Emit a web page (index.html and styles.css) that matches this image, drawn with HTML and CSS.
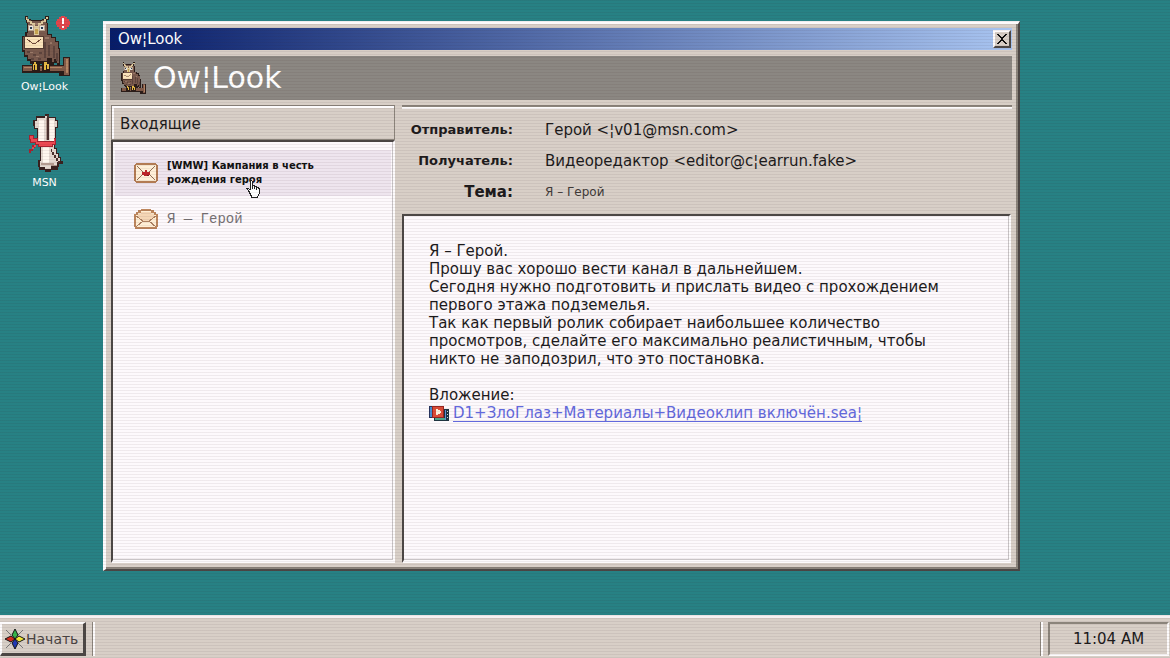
FILE: index.html
```html
<!DOCTYPE html>
<html lang="ru">
<head>
<meta charset="utf-8">
<title>Ow¦Look</title>
<link rel="stylesheet" href="styles.css">
</head>
<body>
<svg class="sprites" width="0" height="0" aria-hidden="true">
  <symbol id="owl" viewBox="0 0 50 60" shape-rendering="crispEdges">
    <path fill="#2b1c18" d="M3 0H6V3H9V4H20V3H23V0H27V4H25V7H26V18H30V21H34V25H37V32H38V50H35V47H32V50H28V46H23V48H8V45H5V41H2V36H0V20H3V16H5V7H4V4H3z"/>
    <path fill="#795a4d" d="M4 1H6V4H9V5H20V4H24V7H25V19H29V22H33V26H36V33H37V47H35V43H32V46H30V42H25V45H9V43H6V39H3V34H1V21H5V17H6V7H5V4H4z"/>
    <path fill="#5d443d" d="M22 26H24V42H22zM26 29H28V40H26zM31 30H33V42H31zM34 37H36V45H34zM5 35H8V37H5zM11 38H14V40H11zM17 36H20V38H17zM9 42H12V44H9zM16 42H19V44H16z"/>
    <path fill="#9a7968" d="M23 21H27V23H23zM28 26H30V28H28zM10 7H19V9H10zM8 36H11V37H8zM14 40H17V41H14z"/>
    <path fill="#dfcc9e" d="M4 1H5V3H7V5H10V7H13V10H16V7H19V5H22V3H24V1H26V3H24V6H21V8H19V11H17V19H12V11H10V8H8V6H5V4H4z"/>
    <path fill="#bfa994" d="M6 9H12V15H6zM17 9H23V15H17z"/>
    <path fill="#ece9e2" d="M7 10H11V14H7zM18 10H22V14H18z"/>
    <path fill="#2c4055" d="M8 11H10V13H8zM19 11H21V13H19z"/>
    <path fill="#c8a44f" d="M13 13H16V18H13z"/>
    <path fill="#553b30" d="M2 20H22V33H2z"/><path fill="#fbe3bb" d="M3 21H21V32H3z"/>
    <path d="M5 23L10 27H14L19 23" fill="none" stroke="#70493a"/>
    <path fill="#2b1c18" d="M0 49H41V41H48V60H37V57H0z"/><path fill="#805a48" d="M1 50H42V42H47V59H42V55H1z"/>
    <path fill="#b48564" d="M2 51H40V52H2zM44 43H46V57H44z"/>
    <path fill="#2b1c18" d="M10 46H18V55H10zM20 46H28V55H20z"/>
    <path fill="#e6bb43" d="M12 46H14V48H15V54H13V49H12V54H11V48H12zM22 46H25V48H27V53H25V49H24V54H22z"/>
  </symbol>
  <symbol id="envelope" viewBox="0 0 24 20" shape-rendering="crispEdges">
    <path fill="#b27b53" d="M2 0h20v1h1v1h1v16h-1v1h-1v1H2v-1H1v-1H0V2h1V1h1z"/><path fill="#fff0d8" d="M2 2h20v16H2z"/>
    <path d="m3 3 7 7h4l7-7M3 17l6-6m12 6-6-6" fill="none" stroke="#937057"/>
    <path fill="#bd2428" d="M11 7h2v2h3v3h-2v1h-4v-1H8V9h3z"/><path fill="#771a20" d="M13 12h2v1h-2z"/>
  </symbol>
  <symbol id="opened" viewBox="0 0 24 20" shape-rendering="crispEdges">
    <path fill="#bd865d" d="M7 0h10v1h3v2h2v2h2v13h-1v2H1v-2H0V5h2V3h2V1h3z"/><path fill="#ffeed4" d="M2 6h2V4h3V2h10v2h3v2h2v12H2z"/>
    <path fill="#f5d6b5" d="M4 5h3V3h10v2h3v3l-6 4h-4L4 8z"/>
    <path d="m2 7 7 5h6l7-5M2 18l7-6m13 6-7-6" fill="none" stroke="#ad8060"/>
  </symbol>
</svg>

<main class="desktop">
  <nav class="shortcuts" aria-label="Рабочий стол">
    <a class="shortcut" href="#owlook">
      <span class="shortcut-picture">
        <svg width="50" height="60"><use href="#owl"/></svg>
        <svg class="alert" width="14" height="14" viewBox="0 0 14 14" shape-rendering="crispEdges"><path fill="#e0454c" d="M5 0h4v1h2v2h2v2h1v4h-1v2h-2v2H9v1H5v-1H3v-2H1V9H0V5h1V3h2V1h2z"/><path fill="#fff" d="M6 2h2v6H6zM6 10h2v2H6z"/></svg>
      </span>
      <span>Ow¦Look</span>
    </a>
    <a class="shortcut" href="#msn">
      <svg width="36" height="58" viewBox="0 0 36 58" shape-rendering="crispEdges">
        <path fill="#38211f" d="M9 2H18V0H22V3H29V6H31V14H29V28H28V34H30V39H32V43H34V47H36V50H32V53H31V56H24V58H18V56H12V53H11V46H13V33H11V27H10V15H7V12H6V6H9z"/>
        <path fill="#e4d8cf" d="M10 4H18V2H21V4H28V7H30V13H28V28H27V35H29V40H31V44H33V48H30V52H24V55H18V53H13V47H14V33H12V27H11V14H8V7H10z"/>
        <path fill="#fff7ee" d="M12 6H17V27H12zM23 6H27V27H23zM16 33H22V50H16z"/>
        <path fill="#4a302c" d="M20 1H22V26H20zM24 35H25V38H27V41H29V44H31V47H33V49H31V47H29V44H27V41H25V38H24z"/>
        <path fill="#b39b90" d="M19 4H20V26H19zM14 49H27V51H14zM24 51H30V52H24z"/>
        <path fill="#a72330" d="M2 21H7V24H11V27H27V24H29V31H26V33H11V31H8V34H6V37H4V39H2V35H5V31H8V29H3V26H2z"/>
        <path fill="#ec4952" d="M3 22H6V25H10V28H27V25H28V30H25V32H12V30H9V28H4V25H3zM7 31H9V33H7V35H5V33H7z"/>
      </svg>
      <span>MSN</span>
    </a>
  </nav>

  <section class="window" id="owlook" aria-label="Ow¦Look">
    <header class="titlebar">
      <span>Ow¦Look</span>
      <button class="close" type="button" aria-label="Закрыть"><svg width="10" height="10" viewBox="0 0 10 10" shape-rendering="crispEdges"><path fill="#111" d="M0 0h2v1h1v1h1v1h2V2h1V1h1V0h2v1H9v1H8v1H7v1H6v2h1v1h1v1h1v1h1v1H8V9H7V8H6V7H4v1H3v1H2v1H0V9h1V8h1V7h1V6h1V4H3V3H2V2H1V1H0z"/></svg></button>
    </header>
    <div class="brand">
      <svg width="26" height="32"><use href="#owl"/></svg>
      <h1>Ow¦Look</h1>
    </div>
    <div class="panes">
      <section class="inbox">
        <h2>Входящие</h2>
        <ul>
          <li><a class="mail mail-new" href="#mail-1"><svg width="24" height="20"><use href="#envelope"/></svg><span>[WMW] Кампания в честь рождения героя</span></a></li>
          <li><a class="mail mail-read" href="#mail-2"><svg width="24" height="20"><use href="#opened"/></svg><span>Я — Герой</span></a></li>
        </ul>
        <svg class="cursor" width="14" height="18" viewBox="0 0 14 18" shape-rendering="crispEdges"><path fill="#222" d="M4 0h2v1h1v4h2v1h2v1h2v1h1v6h-1v2h-1v2H5v-2H4v-2H3v-2H2v-2H1v-1H0V8h3v1h1V1z"/><path fill="#fff" d="M5 1h1v8h1V6h1v3h1V7h1v3h1V8h1v1h1v5h-1v2h-1v1H6v-2H5v-2H4v-2H3v-1H2V9h1v1h2z"/></svg>
      </section>
      <article class="message">
        <dl class="fields">
          <dt>Отправитель:</dt><dd>Герой &lt;¦v01@msn.com&gt;</dd>
          <dt>Получатель:</dt><dd>Видеоредактор &lt;editor@c¦earrun.fake&gt;</dd>
          <dt class="subject-label">Тема:</dt><dd class="subject">Я – Герой</dd>
        </dl>
        <div class="letter">
          <p>Я – Герой.<br>Прошу вас хорошо вести канал в дальнейшем.<br>Сегодня нужно подготовить и прислать видео с прохождением<br>первого этажа подземелья.<br>Так как первый ролик собирает наибольшее количество<br>просмотров, сделайте его максимально реалистичным, чтобы<br>никто не заподозрил, что это постановка.</p>
          <p>Вложение:</p>
          <p class="attachment"><svg width="20" height="16" viewBox="0 0 20 16" shape-rendering="crispEdges"><path fill="#26325e" d="M0 0h14v12H0z"/><path fill="#488fd0" d="M1 1h2v10H1z"/><path fill="#1c3543" d="M5 3h15v12H5z"/><path fill="#4fa68b" d="M6 12h11v2H6z"/><path fill="#5f8fd8" d="M16 4h1v10h-1z"/><path fill="#dbe6e8" d="M18 5h1v1h-1zM18 8h1v1h-1zM18 11h1v1h-1z"/><path fill="#952622" d="M3 0h12v12H3z"/><path fill="#dc4c37" d="M4 1h10v10H4z"/><path fill="#fff1dc" d="M7 3h2v1h2v1h1v2h-1v1H9v1H7z"/></svg><a href="#clip">D1+ЗлоГлаз+Материалы+Видеоклип включён.sea¦</a></p>
        </div>
      </article>
    </div>
  </section>
</main>

<footer class="taskbar">
  <button class="start" type="button"><svg width="22" height="22" viewBox="0 0 22 22"><path d="m2 2 5 5m12-5-5 5M2 20l5-5m12 5-5-5" stroke="#777" fill="none"/><g stroke="#141414"><path fill="#35b54a" d="m11 1 3 6-3 4-3-4z"/><path fill="#f5ed37" d="m21 11-6 3-4-3 4-3z"/><path fill="#2038b5" d="m11 21-3-6 3-4 3 4z"/><path fill="#d52b20" d="m1 11 6-3 4 3-4 3z"/></g></svg><span>Начать</span></button>
  <div class="tasks"></div>
  <time class="clock">11:04 AM</time>
</footer>
</body>
</html>
```

FILE: styles.css
```css
* { box-sizing: border-box; }

:root {
  --face: #d8cfc7;
  --light: #fdfbfc;
  --mid: #8b847b;
  --dark: #4c4745;
}

body {
  margin: 0;
  min-height: 100vh;
  display: flex;
  flex-direction: column;
  background: #278184;
  color: #1c1a1b;
  font: 15px/18px "DejaVu Sans", "Noto Sans", sans-serif;
}

body::after {
  content: "";
  position: fixed;
  inset: 0;
  pointer-events: none;
  background: repeating-linear-gradient(rgba(60, 35, 40, 0.07) 0 1px, transparent 1px 3px);
}

h1, h2, p, ul, dl, dd { margin: 0; padding: 0; font-weight: inherit; }
ul { list-style: none; }
svg { display: block; flex: none; }
a { color: inherit; text-decoration: none; }
button { font: inherit; color: inherit; padding: 0; }
.sprites { position: absolute; }

.desktop {
  flex: 1;
  display: flex;
  padding: 16px 150px 44px 0;
}

.shortcuts {
  width: 103px;
  flex: none;
  padding-right: 14px;
  display: flex;
  flex-direction: column;
  gap: 19px;
}

.shortcut {
  display: flex;
  flex-direction: column;
  align-items: center;
  gap: 3px;
  color: #fff;
  font-size: 11px;
  line-height: 16px;
}
.shortcut-picture { position: relative; padding-left: 4px; }
.alert { position: absolute; top: 0; right: 2px; }

.window {
  flex: 1;
  min-width: 0;
  margin-top: 5px;
  display: flex;
  flex-direction: column;
  padding: 4px 6px 6px 4px;
  background: var(--face);
  border: 2px solid;
  border-width: 3px 2px 2px 3px;
  border-color: var(--light) var(--dark) var(--dark) var(--light);
  box-shadow: inset -2px -2px var(--mid);
}

.titlebar {
  display: flex;
  align-items: center;
  justify-content: space-between;
  height: 22px;
  padding: 0 1px 0 8px;
  background: linear-gradient(90deg, #061c68, #a8c4f0);
  color: #fff;
  line-height: 22px;
}

.close {
  display: grid;
  place-items: center;
  width: 18px;
  height: 18px;
  background: var(--face);
  border: 2px solid;
  border-color: var(--light) var(--dark) var(--dark) var(--light);
}

.brand {
  display: flex;
  align-items: center;
  gap: 6px;
  height: 44px;
  margin: 6px 0 5px;
  padding-left: 11px;
  background: #8b8782;
  color: #fff;
}
.brand h1 { font-size: 30px; line-height: 44px; }

.panes {
  flex: 1;
  display: flex;
  gap: 7px;
  min-height: 0;
  padding-left: 1px;
}

.inbox {
  position: relative;
  flex: 0 0 284px;
  display: flex;
  flex-direction: column;
}
.inbox h2 {
  height: 35px;
  padding-left: 8px;
  border: 1px solid var(--mid);
  box-shadow: inset 2px 2px var(--light);
  font-size: 15px;
  line-height: 36px;
}
.inbox ul, .letter {
  flex: 1;
  background: #fdf9fc;
  border: solid;
  border-width: 2px 2px 3px 2px;
  border-color: var(--dark) var(--light) var(--light) var(--dark);
  box-shadow: inset -1px -1px #c9c4c6;
}
.inbox ul { padding: 8px 2px; }

.mail {
  display: flex;
  align-items: center;
  gap: 9px;
  min-height: 46px;
  padding: 0 60px 0 19px;
}
.mail-new {
  background: #eee5ee;
  color: #111;
  font-size: 10px;
  font-weight: bold;
  line-height: 14px;
}
.mail-read {
  color: #767174;
  font-family: "Liberation Mono", monospace;
  font-size: 14px;
}

.cursor { position: absolute; left: 135px; top: 75px; }

.message {
  flex: 1;
  min-width: 0;
  display: flex;
  flex-direction: column;
  border-top: 2px solid var(--mid);
  box-shadow: inset 0 2px var(--light);
}

.fields {
  display: grid;
  grid-template-columns: 111px 1fr;
  grid-auto-rows: 31px;
  column-gap: 32px;
  align-items: center;
  padding: 7px 0;
}
.fields dt {
  font-size: 13px;
  font-weight: bold;
  text-align: right;
}
.fields .subject-label { font-size: 15px; }
.fields .subject { font-size: 12px; color: #403a38; }

.letter { padding: 26px 25px; margin-right: 1px; }
.letter p + p { margin-top: 18px; }
.letter .attachment {
  display: flex;
  align-items: center;
  gap: 4px;
  margin-top: 1px;
}
.attachment a {
  color: #6268dc;
  border-bottom: 1px solid;
  line-height: 16px;
}

.taskbar {
  display: flex;
  gap: 7px;
  height: 43px;
  padding: 4px 1px 2px 0;
  background: var(--face);
  border-top: 3px solid #f6f1f2;
}
.start {
  display: flex;
  align-items: center;
  width: 86px;
  height: 34px;
  padding-left: 2px;
  background: var(--face);
  border: 3px solid;
  border-width: 2px 3px 3px 2px;
  border-color: var(--light) var(--dark) var(--dark) var(--light);
  white-space: nowrap;
  color: #4a4443;
  font-size: 14px;
}
.tasks {
  flex: 1;
  border: solid;
  border-width: 0 1px 0 2px;
  border-color: var(--light) var(--mid) var(--light) var(--light);
  box-shadow: -1px 0 var(--mid), 2px 0 var(--light);
}
.clock {
  width: 121px;
  border: 2px solid;
  border-color: var(--mid) var(--light) var(--light) var(--mid);
  text-align: center;
  line-height: 30px;
}
```
